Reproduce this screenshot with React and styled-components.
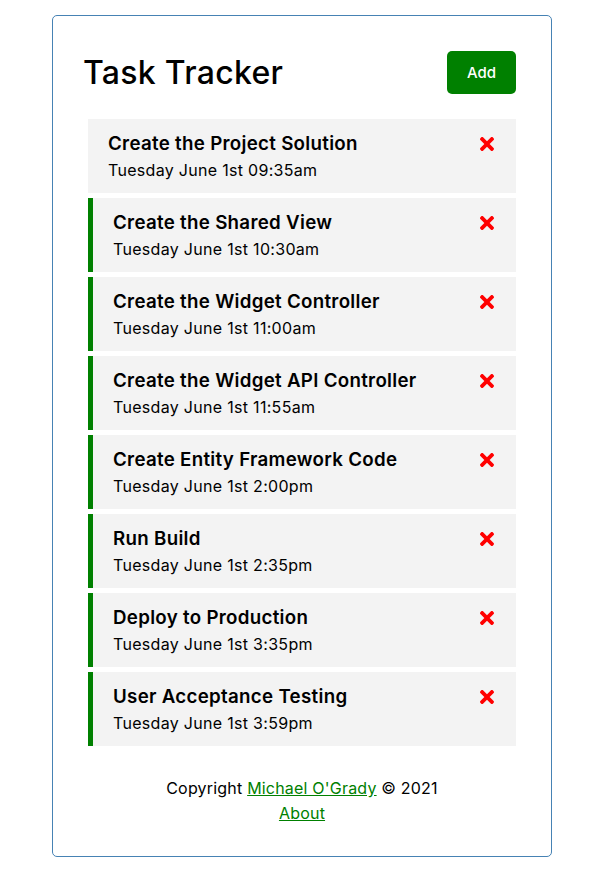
import React from "react";
import styled, { createGlobalStyle } from "styled-components";

const Global = createGlobalStyle`
  * { box-sizing: border-box; margin: 0; padding: 0; }
  body { font-family: Inter, "Open Sans", sans-serif; background: #fff; color: #000; }
`;

const Container = styled.div`
  width: 500px;
  margin: 15px 0 22px 52px;
  border: 1px solid steelblue;
  border-radius: 5px;
  padding: 30px;
`;

const Header = styled.header`
  display: flex;
  justify-content: space-between;
  align-items: center;
  margin-bottom: 20px;
`;

const Title = styled.h1`
  font-size: 32px;
  font-weight: 500;
  line-height: 48px;
  letter-spacing: 0.3px;
`;

const Button = styled.button`
  background: ${(p) => p.$color || "#000"};
  color: #fff;
  border: none;
  padding: 10px 20px;
  margin: 5px;
  border-radius: 5px;
  font-family: inherit;
  font-size: 15px;
  line-height: 23px;
  font-weight: 500;
  cursor: pointer;
`;

const Task = styled.div`
  background: #f3f3f3;
  margin: 5px;
  padding: 10px 20px;
  border-left: ${(p) => (p.$reminder ? "5px solid green" : "none")};
`;

const TaskTitle = styled.h3`
  display: flex;
  justify-content: space-between;
  align-items: center;
  font-size: 18.72px;
  font-weight: 600;
  line-height: 29px;
  letter-spacing: 0.3px;
`;

const TaskDay = styled.p`
  font-size: 16px;
  line-height: 25px;
  letter-spacing: 0.3px;
`;

const Footer = styled.footer`
  margin-top: 30px;
  text-align: center;
  font-size: 16px;
  line-height: 25px;
  letter-spacing: 0.2px;
`;

const Link = styled.a`
  color: green;
  text-decoration: underline;
`;

const TimesIcon = styled.svg`
  width: 14px;
  height: 14px;
  margin-right: 2px;
  flex-shrink: 0;
`;

const Times = () => (
  <TimesIcon viewBox="0 80 352 352">
    <path
      fill="red"
      d="M242.72 256l100.07-100.07c12.28-12.28 12.28-32.19 0-44.48l-22.24-22.24c-12.28-12.28-32.19-12.28-44.48 0L176 189.28 75.93 89.21c-12.28-12.28-32.19-12.28-44.48 0L9.21 111.45c-12.28 12.28-12.28 32.19 0 44.48L109.28 256 9.21 356.07c-12.28 12.280-12.28 32.19 0 44.48l22.24 22.24c12.28 12.28 32.2 12.28 44.48 0L176 322.72l100.07 100.07c12.28 12.28 32.2 12.28 44.48 0l22.24-22.24c12.28-12.28 12.28-32.19 0-44.48L242.72 256z"
    />
  </TimesIcon>
);

const tasks = [
  { text: "Create the Project Solution", day: "Tuesday June 1st 09:35am", reminder: false },
  { text: "Create the Shared View", day: "Tuesday June 1st 10:30am", reminder: true },
  { text: "Create the Widget Controller", day: "Tuesday June 1st 11:00am", reminder: true },
  { text: "Create the Widget API Controller", day: "Tuesday June 1st 11:55am", reminder: true },
  { text: "Create Entity Framework Code", day: "Tuesday June 1st 2:00pm", reminder: true },
  { text: "Run Build", day: "Tuesday June 1st 2:35pm", reminder: true },
  { text: "Deploy to Production", day: "Tuesday June 1st 3:35pm", reminder: true },
  { text: "User Acceptance Testing", day: "Tuesday June 1st 3:59pm", reminder: true },
];

export default function App() {
  return (
    <>
      <Global />
      <Container>
        <Header>
          <Title>Task Tracker</Title>
          <Button $color="green">Add</Button>
        </Header>
        {tasks.map((t) => (
          <Task key={t.text} $reminder={t.reminder}>
            <TaskTitle>
              {t.text} <Times />
            </TaskTitle>
            <TaskDay>{t.day}</TaskDay>
          </Task>
        ))}
        <Footer>
          <p>
            Copyright <Link href="#">Michael O'Grady</Link> © 2021
          </p>
          <Link href="#">About</Link>
        </Footer>
      </Container>
    </>
  );
}
